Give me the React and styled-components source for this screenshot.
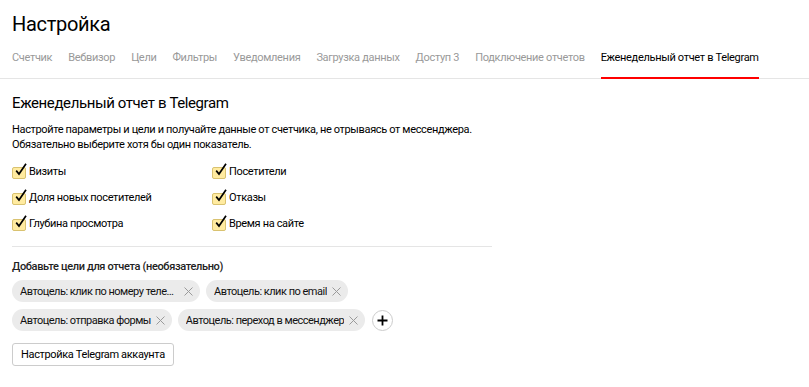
import React from "react";
import styled, { createGlobalStyle } from "styled-components";

const Global = createGlobalStyle`
  html, body { margin: 0; padding: 0; background: #fff; }
  body { font-family: Roboto, "Liberation Sans", Arial, sans-serif; color: #000; }
`;

const Page = styled.div`
  width: 809px;
  height: 387px;
  overflow: hidden;
  background: #fff;
`;

const Header = styled.div`
  padding: 12px 12px 0;
`;

const Title = styled.h1`
  margin: 0;
  font-size: 20px;
  font-weight: 400;
  line-height: 24px;
  letter-spacing: -0.3px;
  color: #000;
`;

const TabBar = styled.nav`
  display: flex;
  gap: 16px;
  margin-top: 15px;
  padding: 0 12px;
  border-bottom: 1px solid #e5e5e5;
`;

const Tab = styled.div`
  font-size: 11px;
  line-height: 14px;
  letter-spacing: -0.32px;
  padding-bottom: 12px;
  color: ${(p) => (p.$active ? "#000" : "#999")};
  border-bottom: 2px solid ${(p) => (p.$active ? "#f00" : "transparent")};
  margin-bottom: -1px;
  white-space: nowrap;
`;

const Content = styled.div`
  padding: 14px 12px 0;
  width: 480px;
  font-size: 11px;
  letter-spacing: -0.35px;
`;

const H2 = styled.h2`
  margin: 0;
  font-size: 15px;
  font-weight: 400;
  line-height: 20px;
  letter-spacing: -0.4px;
`;

const Text = styled.p`
  margin: 9px 0 0;
  line-height: 15px;
  white-space: nowrap;
`;

const Grid = styled.div`
  display: grid;
  grid-template-columns: 200px 1fr;
  row-gap: 9px;
  margin-top: 11px;
  padding-bottom: 14px;
  border-bottom: 1px solid #e5e5e5;
`;

const CheckRow = styled.label`
  display: flex;
  align-items: center;
  gap: 3px;
  line-height: 16px;
  height: 17px;
`;

const Box = styled.span`
  position: relative;
  width: 14px;
  height: 12px;
  box-sizing: border-box;
  border: 1px solid #d9c270;
  border-radius: 2px;
  background: #ffeba0;
  flex: none;
  margin-top: 3px;
`;

const Tick = styled.svg`
  position: absolute;
  left: 1px;
  top: -5px;
  width: 13px;
  height: 14px;
  overflow: visible;
`;

const Label = styled.div`
  margin-top: 13px;
  line-height: 14px;
  font-weight: 500;
  color: #222;
`;

const Chips = styled.div`
  display: flex;
  flex-wrap: wrap;
  align-items: center;
  gap: 7px 6px;
  margin-top: 6px;
  width: 480px;
`;

const Chip = styled.div`
  display: flex;
  align-items: center;
  gap: 5px;
  height: 22px;
  padding: 0 7px 0 8px;
  border-radius: 11px;
  background: #ebebeb;
  white-space: nowrap;
  letter-spacing: -0.5px;
  max-width: ${(p) => (p.$max ? p.$max : "none")};
  box-sizing: border-box;
  color: #111;
`;

const ChipText = styled.span`
  overflow: hidden;
  text-overflow: ellipsis;
`;

const Cross = styled.svg`
  flex: none;
`;

const Plus = styled.button`
  width: 21px;
  height: 21px;
  border-radius: 50%;
  border: 1px solid #ccc;
  background: #fff;
  padding: 0;
  display: flex;
  align-items: center;
  justify-content: center;
  margin-left: 1px;
`;

const Button = styled.button`
  display: block;
  margin-top: 12px;
  height: 23px;
  padding: 0 8px;
  border: 1px solid #ccc;
  border-radius: 3px;
  background: #fff;
  font-family: inherit;
  font-size: 11px;
  letter-spacing: -0.35px;
  color: #000;
`;

const Check = ({ children }) => (
  <CheckRow>
    <Box>
      <Tick viewBox="0 0 13 14">
        <path d="M2.2 7.6 L5 11 L12 0.8" fill="none" stroke="#000" strokeWidth="1.7" />
      </Tick>
    </Box>
    {children}
  </CheckRow>
);

const X = () => (
  <Cross width="9" height="9" viewBox="0 0 9 9">
    <path d="M0.5 0.5 L8.5 8.5 M8.5 0.5 L0.5 8.5" stroke="#9a9a9a" strokeWidth="1" />
  </Cross>
);

const tabs = [
  "Счетчик",
  "Вебвизор",
  "Цели",
  "Фильтры",
  "Уведомления",
  "Загрузка данных",
  "Доступ 3",
  "Подключение отчетов",
  "Еженедельный отчет в Telegram",
];

export default function App() {
  return (
    <Page>
      <Global />
      <Header>
        <Title>Настройка</Title>
      </Header>
      <TabBar>
        {tabs.map((t, i) => (
          <Tab key={t} $active={i === tabs.length - 1}>
            {t}
          </Tab>
        ))}
      </TabBar>
      <Content>
        <H2>Еженедельный отчет в Telegram</H2>
        <Text>
          Настройте параметры и цели и получайте данные от счетчика, не отрываясь от мессенджера.
          <br />
          Обязательно выберите хотя бы один показатель.
        </Text>
        <Grid>
          <Check>Визиты</Check>
          <Check>Посетители</Check>
          <Check>Доля новых посетителей</Check>
          <Check>Отказы</Check>
          <Check>Глубина просмотра</Check>
          <Check>Время на сайте</Check>
        </Grid>
        <Label>Добавьте цели для отчета (необязательно)</Label>
        <Chips>
          <Chip $max="188px">
            <ChipText>Автоцель: клик по номеру телефона</ChipText>
            <X />
          </Chip>
          <Chip>
            <ChipText>Автоцель: клик по email</ChipText>
            <X />
          </Chip>
          <Chip>
            <ChipText>Автоцель: отправка формы</ChipText>
            <X />
          </Chip>
          <Chip>
            <ChipText>Автоцель: переход в мессенджер</ChipText>
            <X />
          </Chip>
          <Plus>
            <svg width="11" height="11" viewBox="0 0 11 11">
              <path d="M5.5 0.5 V10.5 M0.5 5.5 H10.5" stroke="#000" strokeWidth="1.8" />
            </svg>
          </Plus>
        </Chips>
        <Button>Настройка Telegram аккаунта</Button>
      </Content>
    </Page>
  );
}
